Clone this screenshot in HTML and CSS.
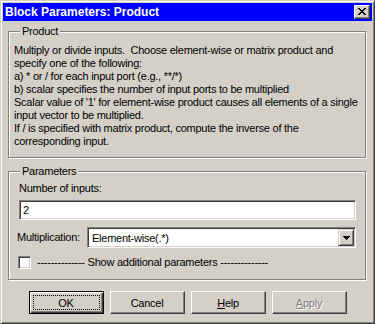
FILE: index.html
```html
<!DOCTYPE html>
<html>
<head>
<meta charset="utf-8">
<link rel="stylesheet" href="styles.css">
</head>
<body>
<div class="window">
  <div class="titlebar">
    <span class="title">Block Parameters: Product</span>
    <span class="close"><svg width="8" height="7" viewBox="0 0 8 7"><path d="M0 0h2v1H0zM6 0h2v1H6zM1 1h2v1H1zM5 1h2v1H5zM2 2h4v1H2zM3 3h2v1H3zM2 4h4v1H2zM1 5h2v1H1zM5 5h2v1H5zM0 6h2v1H0zM6 6h2v1H6z" fill="#000"/></svg></span>
  </div>
  <div class="client">
    <fieldset class="group group-desc">
      <legend>Product</legend>
      <p class="desc">Multiply or divide inputs.  Choose element-wise or matrix product and
specify one of the following:
a) * or / for each input port (e.g., **/*)
b) scalar specifies the number of input ports to be multiplied
Scalar value of '1' for element-wise product causes all elements of a single
input vector to be multiplied.
If / is specified with matrix product, compute the inverse of the
corresponding input.</p>
    </fieldset>
    <fieldset class="group group-params">
      <legend>Parameters</legend>
      <div class="field-label">Number of inputs:</div>
      <div class="edit">2</div>
      <div class="row">
        <span class="row-label">Multiplication:</span>
        <div class="combo">
          <span class="combo-text">Element-wise(.*)</span>
          <span class="combo-btn"><svg width="7" height="4" viewBox="0 0 7 4"><path d="M0 0h7v1H0zM1 1h5v1H1zM2 2h3v1H2zM3 3h1v1H3z" fill="#000"/></svg></span>
        </div>
      </div>
      <div class="check-row">
        <span class="checkbox"></span>
        <span class="check-label">-------------- Show additional parameters --------------</span>
      </div>
    </fieldset>
    <div class="buttons">
      <button class="btn btn-default"><span class="focus">OK</span></button>
      <button class="btn">Cancel</button>
      <button class="btn"><span><u>H</u>elp</span></button>
      <button class="btn btn-disabled"><span><u>A</u>pply</span></button>
    </div>
  </div>
</div>
</body>
</html>
```

FILE: styles.css
```css
html, body {
  margin: 0;
  padding: 0;
  background: #d4d0c8;
}
body {
  font-family: "Liberation Sans", Arial, sans-serif;
  font-size: 11px;
  letter-spacing: -0.25px;
  color: #000;
}
.window {
  width: 375px;
  height: 324px;
  box-sizing: border-box;
  border: 1px solid;
  border-color: #d4d0c8 #404040 #404040 #d4d0c8;
  box-shadow: inset 1px 1px 0 #fff, inset -1px -1px 0 #808080;
  padding: 2px;
  display: flex;
  flex-direction: column;
  background: #d4d0c8;
}
.titlebar {
  height: 18px;
  flex: none;
  background: #0000ff;
  color: #fff;
  display: flex;
  align-items: center;
  justify-content: space-between;
  padding: 0 2px;
}
.title {
  font-weight: bold;
  font-size: 12px;
  line-height: 14px;
  letter-spacing: 0;
}
.close {
  width: 16px;
  height: 14px;
  box-sizing: border-box;
  background: #d4d0c8;
  border: 1px solid;
  border-color: #fff #404040 #404040 #fff;
  box-shadow: inset -1px -1px 0 #808080;
  display: flex;
  align-items: center;
  justify-content: center;
  padding: 0 1px 1px 0;
}
.close svg { display: block; }
.client {
  flex: 1;
  padding: 4px 6px 0 5px;
  display: flex;
  flex-direction: column;
}
.group {
  margin: 0;
  min-width: 0;
  border: 1px solid #808080;
  box-shadow: 1px 1px 0 #fff, inset 1px 1px 0 #fff;
  padding: 6px 9px 9px 5px;
}
.group legend {
  margin-left: 6px;
  padding: 0 2px;
  line-height: 13px;
  background: #d4d0c8;
}
.desc {
  margin: 0;
  white-space: pre;
  line-height: 13px;
}
.group-params {
  margin-top: 7px;
  padding: 4px 9px 10px 5px;
}
.field-label {
  line-height: 13px;
  padding-left: 5px;
}
.edit {
  margin: 5px 0 0 5px;
  height: 20px;
  box-sizing: border-box;
  background: #fff;
  border: 1px solid;
  border-color: #808080 #fff #fff #808080;
  box-shadow: inset 1px 1px 0 #404040, inset -1px -1px 0 #d4d0c8;
  padding: 0 3px;
  line-height: 18px;
}
.row {
  margin-top: 7px;
  display: flex;
  align-items: center;
  padding-left: 3px;
}
.row-label {
  width: 70px;
  flex: none;
  line-height: 13px;
}
.combo {
  flex: 1;
  height: 21px;
  box-sizing: border-box;
  background: #fff;
  border: 1px solid;
  border-color: #808080 #fff #fff #808080;
  box-shadow: inset 1px 1px 0 #404040, inset -1px -1px 0 #d4d0c8;
  display: flex;
  align-items: center;
  justify-content: space-between;
  padding: 1px 1px 1px 4px;
}
.combo-btn {
  width: 16px;
  height: 17px;
  box-sizing: border-box;
  background: #d4d0c8;
  border: 1px solid;
  border-color: #d4d0c8 #404040 #404040 #d4d0c8;
  box-shadow: inset 1px 1px 0 #fff, inset -1px -1px 0 #808080;
  display: flex;
  align-items: center;
  justify-content: center;
}
.combo-btn svg { display: block; }
.check-row {
  margin-top: 8px;
  display: flex;
  align-items: center;
  gap: 6px;
  padding-left: 4px;
}
.checkbox {
  width: 13px;
  height: 13px;
  box-sizing: border-box;
  background: #fff;
  border: 1px solid;
  border-color: #808080 #fff #fff #808080;
  box-shadow: inset 1px 1px 0 #404040, inset -1px -1px 0 #d4d0c8;
}
.check-label { line-height: 13px; }
.buttons {
  margin-top: 11px;
  display: flex;
  justify-content: center;
  gap: 6px;
  padding-left: 1px;
}
.btn {
  width: 75px;
  height: 23px;
  box-sizing: border-box;
  margin: 0;
  padding: 0;
  font: inherit;
  letter-spacing: inherit;
  color: #000;
  background: #d4d0c8;
  border: 1px solid;
  border-color: #fff #404040 #404040 #fff;
  box-shadow: inset -1px -1px 0 #808080;
  border-radius: 0;
  display: flex;
  align-items: center;
  justify-content: center;
}
.btn u { text-decoration: underline; }
.btn-default {
  border-color: #000;
  box-shadow: inset 1px 1px 0 #fff, inset -1px -1px 0 #404040, inset -2px -2px 0 #808080;
  padding: 3px;
}
.focus {
  flex: 1;
  align-self: stretch;
  border: 1px dotted #000;
  display: flex;
  align-items: center;
  justify-content: center;
}
.btn-disabled {
  color: #808080;
  text-shadow: 1px 1px 0 #fff;
}
```
